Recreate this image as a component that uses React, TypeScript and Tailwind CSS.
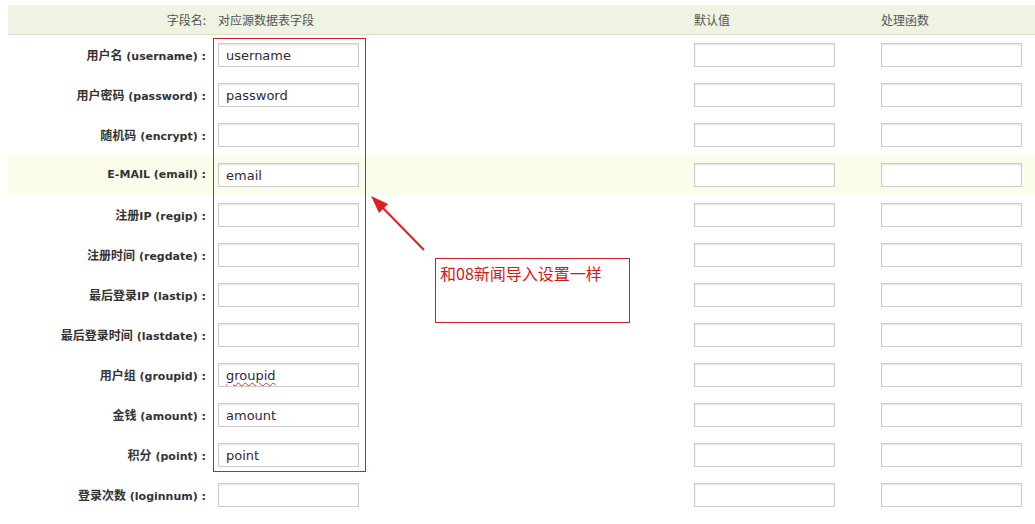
import React from "react";

const rows: { label: string; value: string; hl?: boolean; squiggle?: boolean }[] = [
  { label: "用户名 (username) :", value: "username" },
  { label: "用户密码 (password) :", value: "password" },
  { label: "随机码 (encrypt) :", value: "" },
  { label: "E-MAIL (email) :", value: "email", hl: true },
  { label: "注册IP (regip) :", value: "" },
  { label: "注册时间 (regdate) :", value: "" },
  { label: "最后登录IP (lastip) :", value: "" },
  { label: "最后登录时间 (lastdate) :", value: "" },
  { label: "用户组 (groupid) :", value: "groupid", squiggle: true },
  { label: "金钱 (amount) :", value: "amount" },
  { label: "积分 (point) :", value: "point" },
  { label: "登录次数 (loginnum) :", value: "" },
];

function Label({ text }: { text: string }) {
  const parts = text.split(/([\u4e00-\u9fff]+)/).filter((p) => p.length > 0);
  return (
    <>
      {parts.map((p, i) =>
        /[\u4e00-\u9fff]/.test(p) ? (
          <span key={i} className="text-[12px] [font-family:'Noto_Sans_CJK_SC',sans-serif]">
            {p}
          </span>
        ) : (
          <span key={i}>{p}</span>
        )
      )}
    </>
  );
}

function Box({ children }: { children?: React.ReactNode }) {
  return (
    <div className="ml-[5px] flex h-[24px] w-[141px] items-center border border-[#cccccc] bg-white pl-[7px] pt-[1px] text-[13px] text-[#33283a] shadow-[inset_0_1px_2px_rgba(0,0,0,0.12)] [font-family:'DejaVu_Sans',sans-serif]">
      {children}
    </div>
  );
}

export default function App() {
  return (
    <div className="relative h-[524px] w-[1035px] overflow-hidden bg-white pt-[5px] pl-[8px] [font-family:'DejaVu_Sans','Noto_Sans_CJK_SC',sans-serif]">
      <div className="grid h-[30px] grid-cols-[205px_476px_187px_1fr] items-center border-b border-[#d9dfcc] bg-[#eef3e2] text-[12px] text-[#555] [font-family:'Noto_Sans_CJK_SC',sans-serif]">
        <div className="pr-[7px] text-right">字段名:</div>
        <div className="pl-[5px]">对应源数据表字段</div>
        <div className="pl-[5px]">默认值</div>
        <div className="pl-[5px]">处理函数</div>
      </div>
      {rows.map((r, i) => (
        <div
          key={i}
          className={`grid h-[40px] grid-cols-[205px_476px_187px_1fr] items-center ${r.hl ? "bg-[#fafde9]" : ""}`}
        >
          <div className="pr-[7px] pt-[1px] text-right text-[11px] font-bold text-[#333]">
            <Label text={r.label} />
          </div>
          <div>
            <Box>
              {r.squiggle ? (
                <span className="underline decoration-[#e03030] decoration-wavy decoration-1 underline-offset-2">{r.value}</span>
              ) : (
                r.value
              )}
            </Box>
          </div>
          <div>
            <Box />
          </div>
          <div>
            <Box />
          </div>
        </div>
      ))}

      {/* annotation: red frame around source column */}
      <div className="absolute left-[213px] top-[38px] h-[434px] w-[153px] border border-[#c8202a]" />

      {/* annotation arrow */}
      <svg className="absolute left-0 top-0" width="1035" height="524" viewBox="0 0 1035 524">
        <line x1="424" y1="250" x2="378" y2="203" stroke="#e02020" strokeWidth="2" />
        <polygon points="371,196 388,204 379,213" fill="#e02020" />
      </svg>

      {/* annotation note */}
      <div className="absolute left-[435px] top-[258px] h-[65px] w-[195px] border border-[#c8202a] bg-white px-[4px] pt-[3px] text-[16px] leading-[22px] text-[#d01818] [font-family:'Noto_Sans_CJK_SC',sans-serif]">
        和08新闻导入设置一样
      </div>
    </div>
  );
}
